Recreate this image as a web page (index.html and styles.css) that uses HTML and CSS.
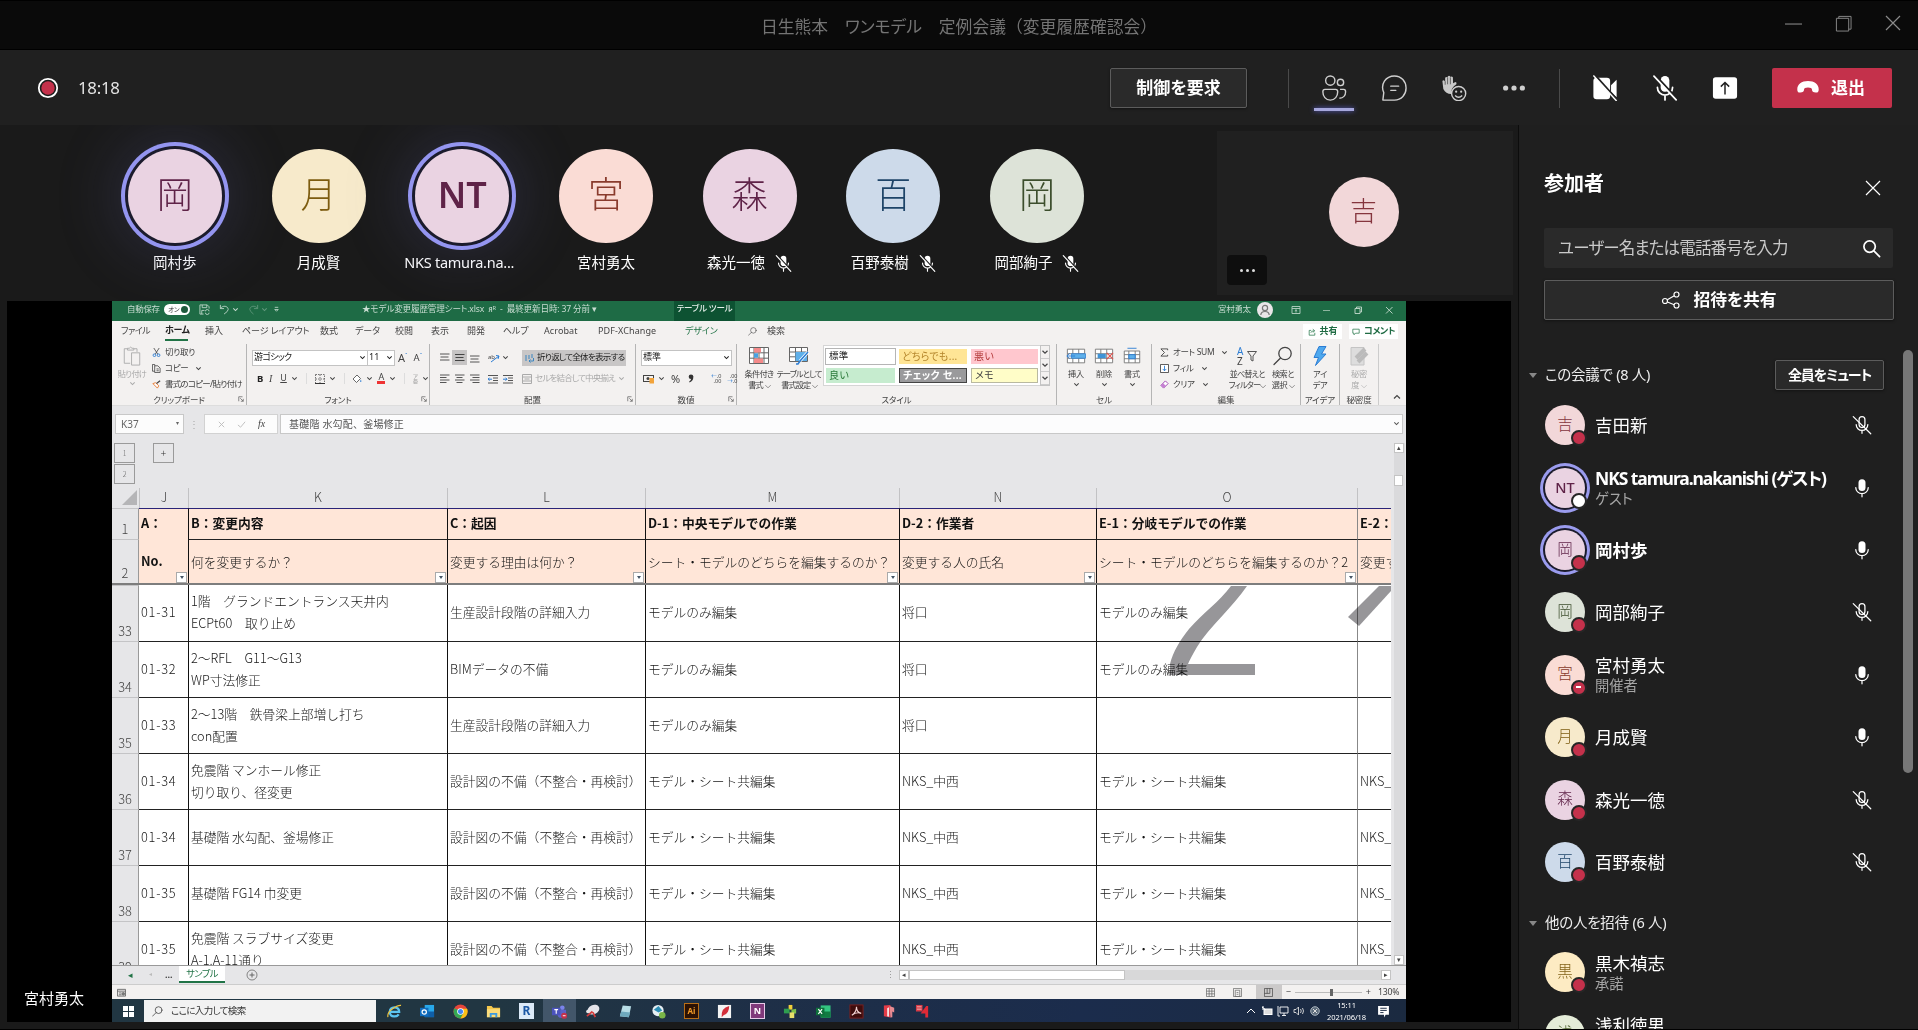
FILE: index.html
```html
<!DOCTYPE html>
<html lang="ja">
<head>
<meta charset="utf-8">
<title>日生熊本 ワンモデル 定例会議</title>
<link rel="stylesheet" href="styles.css">
</head>
<body>
<svg class="defs" aria-hidden="true">
  <symbol id="mic-off" viewBox="0 0 24 24"><g fill="none" stroke="currentColor" stroke-width="1.5" stroke-linecap="round"><rect x="8.5" y="2" width="7" height="13" rx="3.5"/><path d="M5 11.5a7 7 0 0 0 14 0M12 18.5V22M1.5 2l21 20.500"/></g></symbol>
  <symbol id="mic-off-solid" viewBox="0 0 24 24"><rect x="8" y="1" width="8" height="14.500" rx="4" fill="currentColor"/><path d="M5 11.500a7 7 0 0 0 14 0M12 18.500V23" fill="none" stroke="currentColor" stroke-width="1.600" stroke-linecap="round"/><path d="M3.200 .500l20 21.500" stroke="#1f1f1f" stroke-width="2"/><path d="M1.800 1l20.500 22" stroke="currentColor" stroke-width="1.600" stroke-linecap="round"/></symbol>
  <symbol id="mic" viewBox="0 0 24 24"><rect x="7.800" y="1.500" width="8.400" height="14" rx="4.200" fill="currentColor"/><path d="M4.500 11.500a7.500 7.200 0 0 0 15 0M12 18.700V22.500" fill="none" stroke="currentColor" stroke-width="1.500" stroke-linecap="round"/></symbol>
  <symbol id="close" viewBox="0 0 16 16"><path d="M1 1l14 14M15 1L1 15" stroke="currentColor" stroke-width="1.200" fill="none"/></symbol>
  <symbol id="lens" viewBox="0 0 20 20"><g fill="none" stroke="currentColor" stroke-width="1.800" stroke-linecap="round"><circle cx="8" cy="8" r="6"/><path d="M12.500 12.500L18.500 18.500"/></g></symbol>
  <symbol id="lens-left" viewBox="0 0 20 20"><g fill="none" stroke="currentColor" stroke-width="1.300" stroke-linecap="round"><circle cx="12" cy="7.500" r="6.200"/><path d="M7.500 12L1 18.500"/></g></symbol>
  <symbol id="chev" viewBox="0 0 8 8"><path d="M1.500 2.800L4 5.200L6.500 2.800" fill="none" stroke="currentColor" stroke-width="1.200"/></symbol>
  <symbol id="launch" viewBox="0 0 8 8"><path d="M1 7V1H6M3 3l4 4M7 3.800V7H3.800" fill="none" stroke="#555" stroke-width=".9"/></symbol>
</svg>

<header class="titlebar">
  <div class="titlebar-text">日生熊本　ワンモデル　定例会議<span>（変更履歴確認会）</span></div>
  <div class="window-buttons">
    <svg viewBox="0 0 16 16"><path d="M0 8.500H16" stroke="currentColor"/></svg>
    <svg viewBox="0 0 18 18"><path d="M1.500 3.500H14.500V17H1.500ZM4 3.500V1.500H17V15H14.500" fill="none" stroke="currentColor"/></svg>
    <svg><use href="#close"/></svg>
  </div>
</header>

<div class="toolbar">
  <svg class="rec" viewBox="0 0 22 22"><circle cx="11" cy="11" r="9.200" fill="#1d1d1d" stroke="#fff" stroke-width="1.800"/><circle cx="11" cy="11" r="6.700" fill="#c4314b"/></svg>
  <span class="timer">18:18</span>
  <button class="btn control">制御を要求</button>
  <span class="divider d1"></span>
  <div class="tool active"><svg viewBox="0 0 28 28"><g fill="none" stroke="currentColor" stroke-width="1.500"><circle cx="10" cy="6" r="5"/><circle cx="21" cy="8" r="3.400"/><path d="M4.300 15.500H15.700Q18 15.500 18 18C18 23 15 27 10 27S2 23 2 18Q2 15.500 4.300 15.500ZM20.500 15.500H24.500Q26.500 15.500 26.500 18C26.500 22 24 25 19.800 25"/></g></svg></div>
  <div class="tool"><svg viewBox="0 0 28 28"><g fill="none" stroke="currentColor" stroke-width="1.500" stroke-linecap="round"><path d="M2 27L3 19C-1 10 5 1 14.500 1C22 1 27 7 27 14C27 21 22 27 14.500 27Z" stroke-linejoin="round"/><path d="M10.500 12h8.500M10.500 16.500h5.500"/></g></svg></div>
  <div class="tool"><svg viewBox="0 0 28 28"><path d="M1.500 6.500Q2.500 5 4 6.500L4.500 8L4.500 3Q5.700 1.500 7 3L7.300 1.500Q8.600 0 10 1.500L10.200 2.200Q11.500 1 12.800 2.500L13 9L15.500 7.500Q17.500 8 16.500 10C12.500 12.500 10.500 16 11 20.500C7 20.500 4.500 18.500 2.500 15Z" fill="#c8c8c8"/><path d="M7.100 3V10M10.100 2.500V10M4.500 7V10.500" stroke="#444" stroke-width=".8"/><circle cx="19" cy="20" r="7.600" fill="#212121" stroke="currentColor" stroke-width="1.500"/><circle cx="16.300" cy="18" r="1.200" fill="currentColor"/><circle cx="21.700" cy="18" r="1.200" fill="currentColor"/><path d="M15.200 22Q19 26 22.800 22" fill="none" stroke="currentColor" stroke-width="1.500"/></svg></div>
  <div class="tool"><svg viewBox="0 0 28 28"><g fill="currentColor"><circle cx="5" cy="14" r="2.800"/><circle cx="14" cy="14" r="2.800"/><circle cx="23" cy="14" r="2.800"/></g></svg></div>
  <span class="divider d2"></span>
  <div class="tool solid"><svg viewBox="0 0 28 28"><rect x="1.500" y="3" width="18" height="23" rx="3.500" fill="currentColor"/><path d="M20.500 11L26.500 5V24L20.500 18Z" fill="currentColor"/><path d="M3 0L28 28" stroke="#212121" stroke-width="2.500"/><path d="M1.500 .500L26.500 28" stroke="currentColor" stroke-width="1.500"/></svg></div>
  <div class="tool solid"><svg><use href="#mic-off-solid"/></svg></div>
  <div class="tool solid"><svg viewBox="0 0 28 28"><rect x="1" y="2.500" width="26" height="23" rx="3" fill="currentColor"/><path d="M14 21V8.500M9.500 12.500L14 8L18.500 12.500" fill="none" stroke="#212121" stroke-width="1.600"/></svg></div>
  <button class="leave"><svg viewBox="0 0 26 14"><path d="M.5 9.500C.5 4 5.500 0 13 0S25.500 4 25.500 9.500C25.500 12.500 24.500 13.800 22 13.500C19 13.200 17.600 12.500 17.600 10Q17.700 7.500 13 7.500T8.400 10C8.400 12.500 7 13.200 4 13.500C1.500 13.800 .5 12.500 .5 9.500Z" fill="#fff"/></svg>退出</button>
</div>

<div class="body">
<main class="stage">
  <div class="strip">
    <div class="people">
      <div class="person talking"><span class="av pink">岡</span><span class="nm">岡村歩</span></div>
      <div class="person"><span class="av yellow">月</span><span class="nm">月成賢</span></div>
      <div class="person talking"><span class="av pink nt">NT</span><span class="nm latin">NKS tamura.na...</span></div>
      <div class="person"><span class="av peach">宮</span><span class="nm">宮村勇太</span></div>
      <div class="person"><span class="av pink">森</span><span class="nm">森光一徳<svg><use href="#mic-off-solid"/></svg></span></div>
      <div class="person"><span class="av blue">百</span><span class="nm">百野泰樹<svg><use href="#mic-off-solid"/></svg></span></div>
      <div class="person"><span class="av green">岡</span><span class="nm">岡部絢子<svg><use href="#mic-off-solid"/></svg></span></div>
    </div>
    <div class="self"><span class="av rose">吉</span><span class="more"><i></i><i></i><i></i></span></div>
  </div>

  <section class="share">
    <div class="presenter">宮村勇太</div>
    <div class="excel">
      <div class="x-title">
        <span class="autosave">自動保存</span><span class="toggle">オン<i></i></span>
        <svg class="q-save" viewBox="0 0 12 12"><path d="M1 1H9L11 3V5M1 1V11H5M3.500 1V4H8.500V1M3 11V7H6M7 8a2 2 0 0 1 4 0M11 9.500a2 2 0 0 1-4 0" fill="none" stroke="#b9d3c5"/></svg>
        <svg class="q-undo" viewBox="0 0 12 12"><path d="M1.500 1V5H5.500M1.500 5C4 1 10 2 10 6Q10 8 5.500 11" fill="none" stroke="#b9d3c5"/></svg>
        <svg class="tiny"><use href="#chev"/></svg>
        <svg class="q-undo dimmed" viewBox="0 0 12 12"><path d="M10.500 1V5H6.500M10.500 5C8 1 2 2 2 6Q2 8 6 11" fill="none" stroke="#b9d3c5"/></svg>
        <svg class="tiny dimmed"><use href="#chev"/></svg>
        <svg class="tiny q-more" viewBox="0 0 8 8"><path d="M2 1.500H6M2 4L4 6L6 4Z" fill="none" stroke="#b9d3c5"/></svg>
        <span class="doc">★モデル変更履歴管理シート.xlsx&nbsp; ᴙᴿ&nbsp; - &nbsp;最終更新日時: 37 分前 ▾</span>
        <span class="context">テーブル ツール</span>
        <span class="x-user">宮村勇太</span>
        <svg class="x-face" viewBox="0 0 16 16"><circle cx="8" cy="8" r="8" fill="#e9e6e8"/><circle cx="8" cy="6" r="2.600" fill="none" stroke="#777" stroke-width="1.200"/><path d="M3.800 13Q4 9.500 8 9.500T12.200 13" fill="none" stroke="#777" stroke-width="1.200"/></svg>
        <div class="x-win">
          <svg viewBox="0 0 10 10"><path d="M1 1.500H9V8.500H1ZM1 3.500H9M5 7.500V4.800M3.800 5.800L5 4.700L6.200 5.800" fill="none" stroke="#b9d3c5" stroke-width=".9"/></svg>
          <svg viewBox="0 0 10 10"><path d="M1 5.500H8" stroke="#8eb59f"/></svg>
          <svg viewBox="0 0 10 10"><path d="M2 3.500H7V8.500H2ZM3.500 3.500V2H8.500V7H7" fill="none" stroke="#c4dacd" stroke-width=".9"/></svg>
          <svg viewBox="0 0 10 10"><path d="M2 2l6.500 6.500M8.500 2L2 8.500" stroke="#c4dacd" stroke-width=".9"/></svg>
        </div>
      </div>

      <nav class="x-tabs">
        <span class="t1">ファイル</span><span class="t2 on">ホーム</span><span class="t3">挿入</span><span class="t4">ページ レイアウト</span><span class="t5">数式</span><span class="t6">データ</span><span class="t7">校閲</span><span class="t8">表示</span><span class="t9">開発</span><span class="t10">ヘルプ</span><span class="t11">Acrobat</span><span class="t12">PDF-XChange</span><span class="t13">デザイン</span><span class="t14"><svg><use href="#lens-left"/></svg>検索</span>
        <b class="share-btn"><svg viewBox="0 0 10 10"><path d="M4 3H1.500V9H8.500V6M3.500 6Q4 3.500 7.500 3.500M6 1.500L8.500 3.500L6 5.500" fill="none" stroke="#217346" stroke-width=".9"/></svg>共有</b><b class="comment-btn"><svg viewBox="0 0 10 10"><path d="M1 1.500H9V6.500H4.500L2.500 8.500V6.500H1Z" fill="none" stroke="#217346" stroke-width=".9"/></svg>コメント</b>
      </nav>

      <div class="ribbon">
        <div class="grp g-clip">
          <div class="g-body">
            <div class="big dim"><svg viewBox="0 0 20 22"><path d="M5 3H1.500V19H8M12 3H15.500V6.500M5 4.500V2.500H7Q8.500 0 10 2.500H12V4.500ZM9.500 7.500H18.500V21H9.500Z" fill="#f3f1f0" stroke="#aaa"/></svg><span>貼り付け</span><svg class="tiny"><use href="#chev"/></svg></div>
            <div class="stack">
              <span><svg viewBox="0 0 10 10"><path d="M2 0L6.500 7M8 0L3.500 7" stroke="#444" stroke-width=".9"/><circle cx="2.700" cy="8" r="1.500" fill="none" stroke="#2b7cd3"/><circle cx="7.300" cy="8" r="1.500" fill="none" stroke="#2b7cd3"/></svg>切り取り</span>
              <span><svg viewBox="0 0 10 10"><path d="M3 2V.5H.5V8H3M3 2H6.500L9 4.500V9.500H3ZM5 5.500H7.500M5 7.500H7.500" fill="none" stroke="#444" stroke-width=".9"/></svg>コピー<svg class="tiny"><use href="#chev"/></svg></span>
              <span class="w"><svg viewBox="0 0 10 10"><path d="M1 4L6 9L7.500 6.500L4 3Z" fill="#fff" stroke="#e8772e"/><path d="M5 4L9 .8" stroke="#444" stroke-width="1.400"/></svg>書式のコピー/貼り付け</span>
            </div>
          </div>
          <div class="g-label">クリップボード<svg><use href="#launch"/></svg></div>
        </div>

        <div class="grp g-font">
          <div class="g-body rows">
            <div class="row r-f1"><span class="combo fam">游ゴシック<svg class="tiny"><use href="#chev"/></svg></span><span class="combo size">11<svg class="tiny"><use href="#chev"/></svg></span><span class="aup">A<sup>ˆ</sup></span><span class="adn">A<sup>ˇ</sup></span></div>
            <div class="row r-f2"><b>B</b><i class="it">I</i><u>U</u><svg class="tiny"><use href="#chev"/></svg><em class="vr"></em><svg class="ic" viewBox="0 0 10 10"><path d="M.5.5H9.500V9.500M5 .5V9M.5.500V9M.5 5H9.500" fill="none" stroke="#555" stroke-width=".8" stroke-dasharray="1.500 1"/><path d="M0 9.500H10" stroke="#333"/></svg><svg class="tiny"><use href="#chev"/></svg><em class="vr"></em><svg class="ic" viewBox="0 0 10 10"><path d="M1 5L5 1L8.500 4.500L4.500 8.500Z" fill="#fff" stroke="#444" stroke-width=".8"/><path d="M9 5.500Q10 8 8.700 8T9 5.500" fill="#2b7cd3"/></svg><svg class="tiny"><use href="#chev"/></svg><span class="fc">A</span><svg class="tiny"><use href="#chev"/></svg><em class="vr"></em><span class="ruby">ア<br>亜</span><svg class="tiny"><use href="#chev"/></svg></div>
          </div>
          <div class="g-label">フォント<svg><use href="#launch"/></svg></div>
        </div>

        <div class="grp g-align">
          <div class="g-body rows">
            <div class="row r-a">
              <svg class="al" viewBox="0 0 10 10"><path d="M0 1.500H10M1 4.500H9M0 7.500H10" stroke="#555"/></svg><svg class="al sel" viewBox="0 0 10 10"><path d="M0 2H10M1 5H9M0 8H10" stroke="#444"/></svg><svg class="al" viewBox="0 0 10 10"><path d="M0 3.500H10M1 6.500H9M0 9.500H10" stroke="#555"/></svg>
              <svg class="ori" viewBox="0 0 12 10"><path d="M3 9L11 3M8 2.500L11 3L10 6" fill="none" stroke="#2b7cd3"/><text x="0" y="6" font-size="6" fill="#444">ab</text></svg><svg class="tiny"><use href="#chev"/></svg>
              <span class="wrap"><svg viewBox="0 0 10 10"><path d="M1 2V8M4 2V6M7 1V5M8.500 5V8H4M5.500 6.500L4 8L5.500 9.500" fill="none" stroke="#3a85c0"/></svg>折り返して全体を表示する</span>
            </div>
            <div class="row r-a">
              <svg class="al" viewBox="0 0 10 10"><path d="M0 1.500H10M0 4H7M0 6.500H10M0 9H7" stroke="#555"/></svg><svg class="al" viewBox="0 0 10 10"><path d="M0 1.500H10M2 4H8M0 6.500H10M2 9H8" stroke="#555"/></svg><svg class="al" viewBox="0 0 10 10"><path d="M0 1.500H10M3 4H10M0 6.500H10M3 9H10" stroke="#555"/></svg>
              <svg class="ind" viewBox="0 0 10 10"><path d="M0 1.500H10M5 4H10M5 6.500H10M0 9H10" stroke="#555"/><path d="M4 5.200H0M1.500 3.700L0 5.200L1.500 6.700" fill="none" stroke="#2b7cd3"/></svg><svg class="ind2" viewBox="0 0 10 10"><path d="M0 1.500H10M5 4H10M5 6.500H10M0 9H10" stroke="#555"/><path d="M0 5.200H4M2.500 3.700L4 5.200L2.500 6.700" fill="none" stroke="#2b7cd3"/></svg>
              <span class="merge"><svg viewBox="0 0 10 10"><path d="M.5.500H9.500V9.500H.500ZM.5 3H9.500M.5 7H9.500M2.500 5H7.500" fill="none" stroke="#aaa"/></svg>セルを結合して中央揃え<svg class="tiny"><use href="#chev"/></svg></span>
            </div>
          </div>
          <div class="g-label">配置<svg><use href="#launch"/></svg></div>
        </div>

        <div class="grp g-num">
          <div class="g-body rows">
            <div class="row"><span class="combo std">標準<svg class="tiny"><use href="#chev"/></svg></span></div>
            <div class="row r-n"><svg class="cur" viewBox="0 0 12 10"><rect x=".5" y="1.500" width="10" height="6" fill="none" stroke="#444"/><circle cx="5" cy="4.500" r="1.500" fill="#444"/><rect x="6.500" y="4" width="4.500" height="5.500" fill="#f2a33a"/></svg><svg class="tiny"><use href="#chev"/></svg><span class="pct">%</span><svg class="comma" viewBox="0 0 6 10"><circle cx="3" cy="2.800" r="2.300" fill="#333"/><path d="M5.300 2.500Q5.500 7 1.500 8.500L1.200 7.500Q3.500 6 3.300 3Z" fill="#333"/></svg><em class="vr"></em><span class="dec"><s>←</s>.0<br>.00</span><span class="dec">.00<br><s>→</s>.0</span></div>
          </div>
          <div class="g-label">数値<svg><use href="#launch"/></svg></div>
        </div>

        <div class="grp g-style">
          <div class="g-body">
            <div class="big cond"><svg viewBox="0 0 20 18"><path d="M.5.500H19.500V16.500H.500ZM.5 5.800H19.500M.5 11.200H19.500M5 .5V16.500M10 .5V16.500M15 .5V16.500" fill="#fff" stroke="#666"/><path d="M5 1H12V5.500H5ZM5 11.500H14V16H5Z" fill="#f58a8a"/><path d="M5 6.300H9V10.700H5Z" fill="#4aa0e0"/></svg><span>条件付き<br>書式 ⌵</span></div>
            <div class="big tfmt"><svg viewBox="0 0 20 18"><path d="M.5.500H18.500V14.500H.500ZM.5 5H18.500M.5 9.800H18.500M6.500 .5V14.500M12.500 .5V14.500" fill="#fff" stroke="#666"/><path d="M6.500 5H18V14H6.500Z" fill="#5fb0ea"/><path d="M19 5L11 14" stroke="#fff" stroke-width="3"/><path d="M19 5L11 14L9 17L7 17" fill="none" stroke="#2b7cd3" stroke-width="1.500"/></svg><span>テーブルとして<br>書式設定 ⌵</span></div>
            <div class="gallery"><span class="s1">標準</span><span class="s2">どちらでも...</span><span class="s3">悪い</span><span class="s4">良い</span><span class="s5">チェック セ...</span><span class="s6">メモ</span></div>
            <div class="gscroll"><svg><use href="#chev"/></svg><svg><use href="#chev"/></svg><svg><use href="#chev"/></svg></div>
          </div>
          <div class="g-label">スタイル</div>
        </div>

        <div class="grp g-cell">
          <div class="g-body">
            <div class="big"><svg viewBox="0 0 22 18"><path d="M1.500 1.500H20.500V16.500H1.500ZM7.500 1.500V16.500M14 1.500V16.500M1.500 6.500H20.500M1.500 11.500H20.500" fill="#fff" stroke="#777"/><path d="M6 6.500H21.500V11.500H6Z" fill="#5fb0ea" stroke="#2b7cd3" stroke-width=".8"/><path d="M10 9H1M4 6L1 9L4 12" fill="none" stroke="#2b7cd3"/></svg><span>挿入</span><svg class="tiny"><use href="#chev"/></svg></div>
            <div class="big"><svg viewBox="0 0 22 18"><path d="M1.500 1.500H20.500V16.500H1.500ZM7.500 1.500V16.500M14 1.500V16.500M1.500 6.500H20.500M1.500 11.500H20.500" fill="#fff" stroke="#777"/><path d="M4 6.500H13V11.500H4Z" fill="#3f93d6"/><path d="M14 5.500L21 12.500M21 5.500L14 12.500" stroke="#e8504a" stroke-width="1.200"/></svg><span>削除</span><svg class="tiny"><use href="#chev"/></svg></div>
            <div class="big"><svg viewBox="0 0 22 18"><path d="M2.500 3.500H19.500V16.500H2.500ZM7.500 3.500V16.500M14.500 3.500V16.500M2.500 7.500H19.500M2.500 12H19.500" fill="#fff" stroke="#777"/><path d="M7.500 7.500H14.500V12H7.500Z" fill="#5fb0ea" stroke="#2b7cd3"/><path d="M6 .500H16" stroke="#2b7cd3"/></svg><span>書式</span><svg class="tiny"><use href="#chev"/></svg></div>
          </div>
          <div class="g-label">セル</div>
        </div>

        <div class="grp g-edit">
          <div class="g-body">
            <div class="stack">
              <span class="sum"><svg viewBox="0 0 10 10"><path d="M8.500 2.500V1H1L5 5L1 9H8.500V7.500" fill="none" stroke="#444"/></svg>オート SUM<svg class="tiny"><use href="#chev"/></svg></span>
              <span><svg viewBox="0 0 10 10"><path d="M.5.500H9.500V9.500H.500Z" fill="#fff" stroke="#444"/><path d="M5 2V7.500M3 5.500L5 7.500L7 5.500" fill="none" stroke="#2b7cd3"/></svg>フィル<svg class="tiny"><use href="#chev"/></svg></span>
              <span><svg viewBox="0 0 10 10"><path d="M1 6L6 1L9 4L4 9Z" fill="#fff" stroke="#9b3fae"/><path d="M1 6L3.500 3.500L6.500 6.500L4 9Z" fill="#c57fd2"/></svg>クリア<svg class="tiny"><use href="#chev"/></svg></span>
            </div>
            <div class="big sort"><svg viewBox="0 0 20 20"><path d="M10.500 5.500H19.500L16 10V15L14 14V10Z" fill="none" stroke="#555"/><text x="0" y="9" font-size="10" fill="#2b7cd3">A</text><text x="0" y="19" font-size="10" fill="#444">Z</text></svg><span>並べ替えと<br>フィルター⌵</span></div>
            <div class="big find"><svg><use href="#lens-left"/></svg><span>検索と<br>選択 ⌵</span></div>
          </div>
          <div class="g-label">編集</div>
        </div>

        <div class="grp g-idea"><div class="g-body"><div class="big"><svg viewBox="0 0 20 20"><path d="M9 .500H16L11.500 8H16L5.500 19.500L8.500 11.500H4Z" fill="#4ea8ee" stroke="#2b7cd3"/></svg><span>アイ<br>デア</span></div></div><div class="g-label">アイデア</div></div>
        <div class="grp g-sec"><div class="g-body"><div class="big dim"><svg viewBox="0 0 20 20"><path d="M2 1.500H15V19H2Z" fill="#ddd" stroke="#c4c4c4"/><path d="M7 12L16 3M9 16L18 7" stroke="#bbb" stroke-width="4"/></svg><span>秘密<br>度 ⌵</span></div></div><div class="g-label">秘密度</div></div>
        <svg class="collapse" viewBox="0 0 8 8"><path d="M1 5.500L4 2.500L7 5.500" fill="none" stroke="#444" stroke-width="1.200"/></svg>
      </div>

      <div class="fbar">
        <span class="nbox">K37<i>▾</i></span><span class="dots">⋮</span>
        <span class="fx"><svg viewBox="0 0 10 10"><path d="M2 2l6 6M8 2L2 8" stroke="#bbb"/></svg><svg viewBox="0 0 10 10"><path d="M1 5.500L4 8L9 2" fill="none" stroke="#bbb"/></svg><i>fx</i></span>
        <span class="formula">基礎階 水勾配、釜場修正<svg class="tiny"><use href="#chev"/></svg></span>
      </div>

      <div class="grid-area">
        <div class="sheet">
          <div class="outline"><div class="lv"><span>1</span><span>2</span></div><span class="plus">+</span></div>
          <div class="r cols"><span class="corner"></span><span>J</span><span>K</span><span>L</span><span>M</span><span>N</span><span>O</span><span></span></div>
          <div class="r h1"><span>1</span><span>A：</span><span>B：変更内容</span><span>C：起因</span><span>D-1：中央モデルでの作業</span><span>D-2：作業者</span><span>E-1：分岐モデルでの作業</span><span>E-2：</span></div>
          <div class="r h2"><span>2</span><span><b>No.</b><i></i></span><span>何を変更するか？<i></i></span><span>変更する理由は何か？<i></i></span><span>シート・モデルのどちらを編集するのか？<i></i></span><span>変更する人の氏名<i></i></span><span>シート・モデルのどちらを編集するのか？2<i></i></span><span>変更す</span></div>
          <div class="r d first"><span>33</span><span>01-31</span><span>1階　グランドエントランス天井内<br>ECPt60　取り止め</span><span>生産設計段階の詳細入力</span><span>モデルのみ編集</span><span>将口</span><span>モデルのみ編集</span><span></span></div>
          <div class="r d"><span>34</span><span>01-32</span><span>2～RFL　G11～G13<br>WP寸法修正</span><span>BIMデータの不備</span><span>モデルのみ編集</span><span>将口</span><span>モデルのみ編集</span><span></span></div>
          <div class="r d"><span>35</span><span>01-33</span><span>2～13階　鉄骨梁上部増し打ち<br>con配置</span><span>生産設計段階の詳細入力</span><span>モデルのみ編集</span><span>将口</span><span></span><span></span></div>
          <div class="r d"><span>36</span><span>01-34</span><span>免震階 マンホール修正<br>切り取り、径変更</span><span class="long">設計図の不備（不整合・再検討）</span><span>モデル・シート共編集</span><span>NKS_中西</span><span>モデル・シート共編集</span><span>NKS_</span></div>
          <div class="r d"><span>37</span><span>01-34</span><span>基礎階 水勾配、釜場修正</span><span class="long">設計図の不備（不整合・再検討）</span><span>モデル・シート共編集</span><span>NKS_中西</span><span>モデル・シート共編集</span><span>NKS_</span></div>
          <div class="r d"><span>38</span><span>01-35</span><span>基礎階 FG14 巾変更</span><span class="long">設計図の不備（不整合・再検討）</span><span>モデル・シート共編集</span><span>NKS_中西</span><span>モデル・シート共編集</span><span>NKS_</span></div>
          <div class="r d"><span>39</span><span>01-35</span><span>免震階 スラブサイズ変更<br>A-1.A-11通り</span><span class="long">設計図の不備（不整合・再検討）</span><span>モデル・シート共編集</span><span>NKS_中西</span><span>モデル・シート共編集</span><span>NKS_</span></div>
          <svg class="watermark" viewBox="0 0 230 90"><g fill="#979699"><path d="M70 0H86C72 21 48 41 36 61Q29 73 27 78H94V89H9V78C12 66 19 54 28 43C42 27 58 16 70 0Z"/><path d="M218 0H230V5L198 40L187 31Z"/></g></svg>
        </div>
        <div class="vscroll"><i>▴</i><b></b><i>▾</i></div>
      </div>

      <div class="sheets"><span class="prev">◂</span><span class="next">◂</span><span class="ell">...</span><span class="tab">サンプル</span><svg class="add" viewBox="0 0 12 12"><circle cx="6" cy="6" r="5" fill="none" stroke="#777" stroke-width=".9"/><path d="M6 3.500V8.500M3.500 6H8.500" stroke="#666"/></svg><span class="grip">⋮</span><div class="hscroll"><i>◂</i><b></b><i>▸</i></div></div>
      <div class="status">
        <svg class="macro" viewBox="0 0 10 10"><path d="M.5 1.500H9.500V9H.500ZM.5 3.500H9.500M2 5.500H5M2 7.500H5" fill="none" stroke="#666"/><circle cx="7" cy="6.500" r="2" fill="#777"/></svg>
        <svg class="v1" viewBox="0 0 10 10"><path d="M.5.500H9.500V9.500H.500ZM3.500 .5V9.500M6.500 .5V9.500M.5 3.500H9.500M.5 6.500H9.500" fill="none" stroke="#666" stroke-width=".8"/></svg><svg class="v2" viewBox="0 0 10 10"><path d="M.5.500H9.500V9.500H.500ZM2.500 2.500H7.500V9.500H2.500ZM4 5H6M4 7H6" fill="none" stroke="#666" stroke-width=".8"/></svg><span class="v3"><svg viewBox="0 0 10 10"><path d="M.5.500H9.500V9.500H.500ZM3.500 .5V6M6.500 .5V6M.5 6H6.500" fill="none" stroke="#444" stroke-width=".8"/></svg></span>
        <span class="minus">−</span><span class="slider"><i></i></span><span class="plus2">+</span><span class="zoom">130%</span>
      </div>

      <div class="taskbar">
        <span class="start"><i></i><i></i><i></i><i></i></span>
        <span class="tsearch"><svg><use href="#lens-left"/></svg>ここに入力して検索</span>
        <div class="apps">
          <span><svg viewBox="0 0 16 16"><path d="M3 8.500H13Q13 3.500 8 3.500T3 8.500T8 13.200Q11 13.200 12.500 11" fill="none" stroke="#5cc4f0" stroke-width="2.400"/><path d="M1 14Q0 9 6 5T15 1.500" fill="none" stroke="#f2c53d" stroke-width="1.200"/></svg></span>
          <span><svg viewBox="0 0 16 16"><path d="M5 1H15V14H5Z" fill="#28a8ea"/><path d="M5 8H15V14H5Z" fill="#0f5fa8"/><rect y="4" width="9" height="9" fill="#0f6cbd"/><circle cx="4.500" cy="8.500" r="2.300" fill="none" stroke="#fff" stroke-width="1.300"/></svg></span>
          <span><svg viewBox="0 0 16 16"><circle cx="8" cy="8" r="7.500" fill="#e6453a"/><path d="M1.500 4.500A7.500 7.500 0 0 0 8 15.500L11.500 9Z" fill="#34a853"/><path d="M8 15.500A7.500 7.500 0 0 0 15 5H8L11.500 9Z" fill="#fbc116"/><circle cx="8" cy="8" r="3.500" fill="#fff"/><circle cx="8" cy="8" r="2.700" fill="#4285f4"/></svg></span>
          <span><svg viewBox="0 0 16 16"><path d="M1 2H6L7.500 4H15V14H1Z" fill="#f5c84c"/><path d="M1 5.500H15V14H1Z" fill="#fbdc7a"/><path d="M4 9.500H12V14H10V11.500H6V14H4Z" fill="#3d9be0"/></svg></span>
          <span class="rv">R</span>
          <span class="cur-app"><svg viewBox="0 0 16 16"><circle cx="11" cy="4" r="2.500" fill="#7b83eb"/><path d="M6 6H15V11Q14 15 10 15T6 11Z" fill="#5b62c9"/><rect y="4" width="9" height="8" fill="#4b53bc"/><path d="M2.500 6H6.500M4.500 6V10.500" stroke="#fff" stroke-width="1.200"/><circle cx="13" cy="12.500" r="3.300" fill="#c4314b"/><path d="M11.500 12.500H14.500" stroke="#fff"/></svg></span>
          <span><svg viewBox="0 0 16 16"><ellipse cx="9" cy="6" rx="6.500" ry="5" fill="#e4e4ea" transform="rotate(-25 9 6)"/><path d="M2 13L8 8M11 14L8.500 9" stroke="#d23b3b" stroke-width="1.800"/><circle cx="3" cy="8" r="1.800" fill="#e7e7e7"/></svg></span>
          <span><svg viewBox="0 0 16 16"><path d="M5 1.500L14 2.500L11.500 14L2 13Z" fill="#b8dde6"/><path d="M3.500 8L13 9L11.500 14L2 13Z" fill="#6fa9bd"/></svg></span>
          <span><svg viewBox="0 0 16 16"><circle cx="7.500" cy="7" r="6" fill="#e6eef2"/><path d="M3 6L8 2L12 7L8 9Z" fill="#2c8db5"/><circle cx="12" cy="12" r="3.500" fill="#7ab648"/></svg></span>
          <span class="ai">Ai</span>
          <span><svg viewBox="0 0 16 16"><rect x="1" y="1" width="14" height="14" fill="#f3f3f3"/><path d="M5 14Q4 4 13 2Q13 10 7 12Z" fill="#d32f3a"/></svg></span>
          <span class="on">N</span>
          <span><svg viewBox="0 0 16 16"><path d="M6 1H10V6H6Z" fill="#f4d03a"/><path d="M1 5H7V10H1Z" fill="#2e9e4f"/><path d="M9 6L14 5V10H9Z" fill="#7fc04a"/><path d="M7 9H12V15H7Z" fill="#e8e06a"/></svg></span>
          <span><svg viewBox="0 0 16 16"><path d="M5 1.500H15.500V14.500H5Z" fill="#33c481"/><path d="M5 8H15.500V14.500H5Z" fill="#107c41"/><rect y="4" width="9" height="8" fill="#0f703b"/><path d="M2.500 5.500L6.500 10.500M6.500 5.500L2.500 10.500" stroke="#fff" stroke-width="1.200"/></svg></span>
          <span><svg viewBox="0 0 16 16"><rect x="1" y="1" width="14" height="14" fill="#3e0d0d" stroke="#7a2020"/><path d="M3 12Q8 9 8 3Q8 9 13 10Q8 8 3 12Z" fill="none" stroke="#f3d3d3" stroke-width="1.200"/></svg></span>
          <span><svg viewBox="0 0 16 16"><path d="M2 1.500L9 1V14.500L2 13Z" fill="#e23b47"/><path d="M5.500 4.500L7.500 3.500V13.500L5.500 13Z" fill="#f6e0e2"/><path d="M8 2L13 4V9L11 8V14L9 14.500Z" fill="#e78a91"/></svg></span>
          <span><svg viewBox="0 0 16 16"><path d="M1 1H8V8H1Z" fill="#d63a45"/><path d="M12 2L6 10H11V14.500H14V2Z" fill="#e12a36"/><path d="M2 3H7M2 5.500H7" stroke="#f4b5b9"/></svg></span>
        </div>
        <div class="tray">
          <svg viewBox="0 0 12 12"><path d="M2 8L6 4L10 8" fill="none" stroke="#fff"/></svg>
          <svg viewBox="0 0 12 12"><rect x="3" y="4" width="8" height="5.500" fill="#ddd" stroke="#fff"/><path d="M1 2L5 5M2 1V5" stroke="#fff"/></svg>
          <svg viewBox="0 0 12 12"><path d="M3 2H11V8H3ZM7 8V10.500M5 10.500H9M1 1V11H3" fill="none" stroke="#fff" stroke-width=".9"/></svg>
          <svg viewBox="0 0 12 12"><path d="M1 4.500H3L5.500 2V10L3 7.500H1ZM7.500 4Q9 6 7.500 8M9.500 3Q11.500 6 9.500 9" fill="none" stroke="#ddd" stroke-width=".9"/></svg>
          <svg viewBox="0 0 12 12"><circle cx="6" cy="6" r="4.300" fill="#5d6c7c" stroke="#aab4be"/><path d="M4 4L8 8M8 4L4 8" stroke="#ddd"/></svg>
        </div>
        <div class="clock">15:11<br>2021/06/18</div>
        <svg class="note" viewBox="0 0 12 12"><path d="M1 1H11V9H8L6.500 11.500V9H1Z" fill="#fff"/><path d="M3 3H9M3 5H9M3 7H6" stroke="#1d2c45" stroke-width=".9"/></svg>
      </div>
    </div>
  </section>
</main>

<aside class="panel">
  <div class="p-head"><h2>参加者</h2><svg><use href="#close"/></svg></div>
  <div class="p-search"><span>ユーザー名または電話番号を入力</span><svg><use href="#lens"/></svg></div>
  <button class="btn invite"><svg viewBox="0 0 20 20"><g fill="none" stroke="#fff" stroke-width="1.200"><circle cx="4" cy="11" r="2.500"/><circle cx="15.500" cy="4.500" r="2.500"/><circle cx="15.500" cy="15.500" r="2.500"/><path d="M6.300 9.700L13.300 5.800M6.400 12L13.200 14.700"/></g></svg>招待を共有</button>
  <div class="p-sec"><i></i><span>この会議で (8 人)</span><button class="btn mute">全員をミュート</button></div>
  <ul class="plist">
    <li><span class="av rose">吉<em></em></span><div><p>吉田新</p></div><svg><use href="#mic-off"/></svg></li>
    <li><span class="av pink ring nt">NT<em class="guest"></em></span><div><p class="b lat">NKS tamura.nakanishi (ゲスト)</p><small>ゲスト</small></div><svg><use href="#mic"/></svg></li>
    <li><span class="av pink ring">岡<em></em></span><div><p class="b">岡村歩</p></div><svg><use href="#mic"/></svg></li>
    <li><span class="av green">岡<em></em></span><div><p>岡部絢子</p></div><svg><use href="#mic-off"/></svg></li>
    <li><span class="av peach">宮<em class="dnd"></em></span><div><p>宮村勇太</p><small>開催者</small></div><svg><use href="#mic"/></svg></li>
    <li><span class="av yellow">月<em></em></span><div><p>月成賢</p></div><svg><use href="#mic"/></svg></li>
    <li><span class="av pink">森<em></em></span><div><p>森光一徳</p></div><svg><use href="#mic-off"/></svg></li>
    <li><span class="av blue">百<em></em></span><div><p>百野泰樹</p></div><svg><use href="#mic-off"/></svg></li>
  </ul>
  <div class="p-sec second"><i></i><span>他の人を招待 (6 人)</span></div>
  <ul class="plist invited">
    <li><span class="av amber">黒<em></em></span><div><p>黒木禎志</p><small>承諾</small></div></li>
    <li><span class="av lime">浅</span><div><p>浅利徳男</p><small>承諾</small></div></li>
  </ul>
  <div class="p-scroll"></div>
</aside>
</div>
</body>
</html>
```

FILE: styles.css
```css
* { box-sizing: border-box; }
html, body { margin: 0; height: 1030px; overflow: hidden; }
body {
  background: #1b1b1b; color: #fff;
  font-family: "Noto Sans", "Noto Sans CJK JP", sans-serif;
  font-feature-settings: "palt"; line-height: 1.2;
  display: flex; flex-direction: column;
}
svg { display: block; flex: none; }
button { font: inherit; color: inherit; }
.defs { position: absolute; width: 0; height: 0; }

/* window title */
.titlebar { height: 50px; background: #0a0a0a; border-top: 1px solid #000; border-bottom: 1px solid #000; position: relative; display: flex; align-items: center; flex: none; }
.titlebar-text { width: 1918px; text-align: center; padding-left: 0; padding-top: 4px; font-size: 16.800px; color: #747474; }
.titlebar-text span { font-feature-settings: normal; }
.window-buttons { position: absolute; right: 17px; top: 14px; display: flex; gap: 33px; color: #8a8a8a; }
.window-buttons svg { width: 17px; height: 17px; }
.window-buttons svg:last-child { width: 16px; height: 16px; }

/* call toolbar */
.toolbar { height: 75px; flex: none; background: #202020; display: flex; align-items: center; padding: 1px 26px 0 37px; }
.rec { width: 22px; height: 22px; }
.timer { margin-left: 19px; font-size: 16.800px; letter-spacing: -.25px; color: #e3e3e3; }
.btn { background: #2a2a2a; border: 1px solid #5c5c5c; border-radius: 2px; color: #fff; font-weight: 700; padding: 0; box-shadow: 0 1px 3px #0006; }
.control { margin-left: auto; width: 137px; height: 40px; font-size: 17px; }
.divider { width: 1px; height: 39px; background: #4a4a4a; }
.d1 { margin: 0 15px 0 41px; }
.d2 { margin: 0 15px; }
.tool { width: 60px; height: 60px; display: flex; align-items: center; justify-content: center; color: #cfcfcf; position: relative; }
.tool svg { width: 26px; height: 26px; }
.tool.solid { color: #fff; }
.tool.active::after { content: ""; position: absolute; left: 10px; top: 50px; width: 40px; height: 3px; background: #a6a7dc; box-shadow: 0 0 5px #5b5fc7; }
.leave { margin-left: 17px; width: 120px; height: 40px; background: #c4314b; border: 0; border-radius: 2px; font-weight: 700; font-size: 17px; display: flex; align-items: center; justify-content: center; gap: 10px; padding: 0 4px 0 0; }
.leave svg { width: 26px; height: 12px; margin-bottom: 2px; }

.body { flex: 1; display: flex; min-height: 0; }
.stage { width: 1518px; flex: none; background: #1a1a1a; padding: 0 5px 7px 7px; border-bottom: 1px solid #000; }

/* participant strip */
.strip { height: 176px; display: flex; overflow: hidden; }
.people { display: flex; padding-left: 96px; width: 1210px; flex: none; }
.person { width: 143.700px; display: flex; flex-direction: column; align-items: center; padding-top: 24px; flex: none; }
.av { border-radius: 50%; display: flex; align-items: center; justify-content: center; flex: none; position: relative; }
.person .av { width: 94px; height: 94px; font-size: 36px; font-weight: 300; padding-bottom: 2px; }
.pink { background: #ead3e2; color: #5f2348; }
.yellow { background: #f7eacb; color: #7d5c10; }
.peach { background: #fadcd5; color: #893b2d; }
.blue { background: #cddaea; color: #1e4468; }
.green { background: #dde3d8; color: #3c4e2d; }
.rose { background: #f2d7d9; color: #85353e; }
.amber { background: #fdebc3; color: #83631a; }
.lime { background: #e4ecd8; color: #4d6330; }
.person .nt { font-weight: 600; font-size: 36px; }
.talking .av { box-shadow: 0 0 0 3px #1b1b2c, 0 0 0 7px #9495f0, 0 0 60px 14px #6264a738; }
.nm { margin-top: 10px; height: 20px; font-size: 14.500px; display: flex; align-items: center; gap: 10px; white-space: nowrap; }
.nm svg { width: 17px; height: 17px; }
.nm.latin { letter-spacing: -.25px; margin-right: 6px; }
.self { width: 296px; height: 164px; margin-top: 6px; background: #202020; display: flex; align-items: center; justify-content: center; position: relative; padding: 0 3px 2px 0; }
.self .av { width: 70px; height: 70px; font-size: 27px; font-weight: 300; padding-bottom: 2px; }
.more { position: absolute; left: 10px; top: 124px; width: 40px; height: 30px; border-radius: 4px; background: #0e0e0e; display: flex; align-items: center; justify-content: center; gap: 3px; }
.more i { width: 3px; height: 3px; border-radius: 50%; background: #ddd; }

/* shared screen */
.share { height: 721px; width: 1504px; background: #000; display: flex; }
.presenter { width: 105px; flex: none; align-self: flex-end; padding: 0 0 15px 17px; font-size: 15px; }
.excel { width: 1294px; height: 721px; flex: none; background: #e6e6e8; color: #444; font-size: 9px; display: flex; flex-direction: column; overflow: hidden; white-space: nowrap; }
.tiny { width: 7px; height: 7px; }

.x-title { height: 20px; background: #1e6b45; color: #c9ddd2; display: flex; align-items: center; flex: none; padding-bottom: 3px; }
.autosave { margin-left: 15px; width: 33px; font-size: 8.500px; letter-spacing: -.3px; flex: none; }
.toggle { margin-left: 4px; width: 26px; height: 11px; border-radius: 6px; background: #fff; color: #333; font-size: 6.500px; display: flex; align-items: center; justify-content: space-between; padding: 0 2px 0 4px; flex: none; }
.toggle i { width: 7px; height: 7px; border-radius: 50%; background: #1e5a3c; }
.q-save { width: 11px; height: 11px; margin-left: 9px; }
.q-undo { width: 11px; height: 11px; margin: 0 2px 0 9px; }
.dimmed { opacity: .4; }
.q-more { margin-left: 5px; }
.doc { margin-left: 82px; width: 232px; font-size: 8.600px; letter-spacing: -.17px; flex: none; }
.context { margin-left: 80px; width: 61px; height: 20px; margin-bottom: -3px; background: #0d5232; color: #e3eee8; display: flex; align-items: center; justify-content: center; padding-bottom: 5px; font-size: 8.500px; font-weight: 500; letter-spacing: -.2px; flex: none; }
.x-user { margin-left: 483px; width: 33px; font-size: 8.500px; letter-spacing: -.3px; flex: none; }
.x-face { width: 16px; height: 16px; margin-left: 6px; }
.x-win { margin-left: 18px; display: flex; gap: 21px; }
.x-win svg { width: 10px; height: 10px; }

.x-tabs { height: 21px; background: #f3f1f0; display: flex; align-items: center; flex: none; font-size: 9px; letter-spacing: -.1px; }
.x-tabs span, .x-tabs b { flex: none; display: flex; align-items: center; }
.t1 { margin-left: 9px; width: 44px; letter-spacing: -.5px; }
.t2 { width: 23px; font-weight: 700; color: #222; height: 19px; margin-right: 17px; border-bottom: 2px solid #217346; letter-spacing: -.4px; }
.t3 { width: 37px; } .t4 { width: 78px; } .t5 { width: 35px; } .t6 { width: 40px; } .t7 { width: 36px; }
.t8 { width: 36px; } .t9 { width: 36px; } .t10 { width: 41px; } .t11 { width: 54px; letter-spacing: .1px; } .t12 { width: 87px; letter-spacing: .1px; }
.t13 { width: 63px; color: #217346; } .t14 { gap: 10px; }
.t14 svg { width: 9px; height: 9px; }
.x-tabs b { background: #fff; color: #1f6b43; height: 15px; gap: 4px; justify-content: center; }
.x-tabs b svg { width: 8px; height: 8px; }
.share-btn { margin-left: auto; width: 39px; }
.comment-btn { width: 49px; margin: 0 8px 0 7px; letter-spacing: -.4px; }

.ribbon { height: 64px; background: #f3f1f0; display: flex; padding-top: 2px; flex: none; border-bottom: 1px solid #ddd; }
.grp { height: 61px; border-right: 1px solid #b5b5b5; display: flex; flex-direction: column; flex: none; }
.g-body { height: 52px; display: flex; }
.g-label { height: 11px; padding-top: 1px; position: relative; display: flex; align-items: center; justify-content: center; font-size: 8.500px; letter-spacing: -.1px; }
.g-label svg { position: absolute; right: 2px; top: 2px; width: 6px; height: 6px; }
.g-clip { width: 135px; } .g-font { width: 183px; } .g-align { width: 206px; } .g-num { width: 101px; }
.g-style { width: 320px; } .g-cell { width: 95px; } .g-edit { width: 149px; } .g-idea { width: 39px; } .g-sec { width: 39px; border-right-color: #ccc; }
.big { display: flex; flex-direction: column; align-items: center; text-align: center; line-height: 10.500px; font-size: 8.200px; padding-top: 2px; letter-spacing: -.3px; flex: none; }
.big > svg:first-child { width: 20px; height: 20px; margin-bottom: 3px; }
.dim { color: #aaa; }
.g-clip .big { width: 36px; padding-left: 4px; letter-spacing: -.7px; }
.stack { display: flex; flex-direction: column; line-height: 16px; font-size: 8.500px; }
.stack span { height: 16px; display: flex; align-items: center; gap: 4px; letter-spacing: -.3px; }
.stack svg { width: 9px; height: 9px; }
.stack .tiny { width: 7px; height: 7px; margin-left: 3px; }
.g-clip .stack { padding-left: 4px; }
.g-clip .w { letter-spacing: -.75px; }
.rows { flex-direction: column; }
.row { height: 21px; display: flex; align-items: center; }
.rows .row:first-child { margin-top: 3px; }
.combo { height: 16px; background: #fff; border: 1px solid #c3c3c3; display: flex; align-items: center; justify-content: space-between; padding: 0 1px; color: #222; letter-spacing: -.7px; }
.fam { width: 116px; margin-left: 5px; } .size { width: 27px; border-left: 0; letter-spacing: 0; }
.aup { font-size: 11px; margin-left: 3px; } .adn { font-size: 9.500px; margin-left: 6px; }
.row sup { font-size: 6px; line-height: 0; color: #2b7cd3; }
.r-f2 { padding-left: 10px; gap: 4px; }
.r-f2 b { width: 11px; font-size: 9.500px; color: #222; } .it { width: 10px; font-family: "Liberation Serif", serif; font-size: 10px; }
.vr { width: 1px; height: 11px; background: #ddd; margin: 0 4px 0 4px; }
.ic { width: 10px; height: 10px; }
.fc { border-bottom: 3px solid #e33; width: 11px; text-align: center; line-height: 8px; }
.ruby { font-size: 5px; line-height: 5px; text-align: center; color: #888; }
.r-a { padding-left: 7px; }
.al { width: 15px; height: 15px; padding: 2.500px; }
.sel { background: #c6c4c4; }
.ori { width: 12px; height: 10px; margin: 0 2px 0 6px; }
.wrap { margin-left: 13px; background: #c8c6c6; height: 16px; width: 104px; display: flex; align-items: center; gap: 2px; padding-left: 3px; color: #222; letter-spacing: -.7px; font-size: 8.500px; }
.wrap svg, .merge svg:first-child { width: 10px; height: 10px; }
.ind, .ind2 { width: 10px; height: 10px; margin-left: 6px; } .ind2 { margin-left: 5px; }
.merge { margin-left: 9px; display: flex; align-items: center; gap: 3px; color: #a9a9a9; letter-spacing: -.8px; font-size: 8.500px; }
.std { width: 91px; margin-left: 5px; letter-spacing: 0; }
.r-n { padding-left: 7px; gap: 3px; }
.cur { width: 12px; height: 10px; } .pct { font-size: 11px; margin-left: 3px; } .comma { width: 6px; height: 10px; margin: 0 3px 0 5px; }
.dec { font-size: 5.500px; line-height: 5px; text-align: right; margin-right: 3px; }
.dec s { color: #2b7cd3; text-decoration: none; }
.big.cond { width: 32px; margin-left: 6px; letter-spacing: -.7px; } .big.tfmt { width: 46px; margin: 0 1px 0 1px; letter-spacing: -.9px; }
.gallery { flex: 1; height: 41px; margin-top: 1px; background: #fff; border: 1px solid #d5d5d5; border-right: 0; display: grid; grid-template-columns: 69px 68px 67px; gap: 4px; align-content: center; padding: 0 2px; font-size: 10px; letter-spacing: .3px; }
.gallery span { height: 15px; padding-left: 3px; line-height: 14px; }
.gallery .s1 { outline: 1.500px solid #b5b5b5; color: #222; font-size: 9.500px; } .s2 { background: #ffe596; color: #b5862c; } .s3 { background: #ffc7ce; color: #b33a3a; }
.s4 { background: #c6eccf; color: #2b7a3a; } .gallery .s5 { background: #9a9a9c; color: #fff; border: 1.500px solid #444; line-height: 12px; font-weight: 700; } .gallery .s6 { background: #fffdc8; border: 1px solid #b9b9a0; line-height: 12px; }
.gscroll { width: 10px; height: 41px; margin: 1px 7px 0 0; border: 1px solid #c3c3c3; display: flex; flex-direction: column; }
.gscroll svg { width: 8px; height: 13px; border-bottom: 1px solid #ccc; }
.g-cell .g-body { padding-left: 5px; }
.g-cell .big { width: 28px; }
.g-cell .tiny { margin-top: 1px; }
.g-edit .stack { padding-left: 8px; width: 72px; }
.sort { width: 42px; margin-left: 2px; }
.big.sort { letter-spacing: -.85px; }
.find { width: 30px; }
.big.find { letter-spacing: -.45px; }
.g-idea .big, .g-sec .big { width: 38px; }
.collapse { width: 8px; height: 8px; margin: 49px 0 0 14px; }

.fbar { height: 29px; padding: 8px 3px 0 3px; display: flex; flex: none; font-size: 10px; }
.fbar > span { height: 20px; display: flex; align-items: center; }
.nbox { width: 69px; background: #fcfcfc; border: 1px solid #c8c8c8; padding: 0 4px 0 5px; justify-content: space-between; color: #666; }
.nbox i { font-size: 6px; font-style: normal; }
.dots { width: 20px; justify-content: center; color: #aaa; }
.fx { width: 74px; background: #fcfcfc; border: 1px solid #d2d2d2; justify-content: space-evenly; font-family: "Liberation Serif", serif; }
.fx svg { width: 9px; height: 9px; }
.formula { margin-left: 2px; flex: 1; background: #fcfcfd; border: 1px solid #c8c8c8; padding: 0 2px 1px 8px; justify-content: space-between; letter-spacing: .2px; color: #555; font-feature-settings: normal; }

/* worksheet */
.grid-area { height: 530px; display: flex; flex: none; }
.sheet { width: 1279px; height: 530px; overflow: hidden; position: relative; font-feature-settings: normal; color: #161616; font-family: "Noto Sans CJK JP", sans-serif; font-weight: 300; font-size: 12.750px; }
.outline { height: 53px; display: flex; font-size: 7px; color: #666; }
.lv { width: 25px; padding: 8px 0 0 2px; display: flex; flex-direction: column; gap: 1px; }
.lv span, .plus { width: 21px; height: 20px; border: 1px solid #9a9a9a; display: flex; align-items: center; justify-content: center; }
.plus { margin: 8px 0 0 16px; font-size: 10px; color: #333; }
.r { display: grid; grid-template-columns: 27px 49px 259px 198px 254px 197px 261px 34px; }
.r > span { display: flex; align-items: center; position: relative; overflow: hidden; padding: 0 0 2px 2px; border-left: 1px solid #111; border-top: 1px solid #222; line-height: 22px; }
.r > span:first-child { border: 0; border-right: 1px solid #999; border-top: 1px solid #c4c4c6; background: #e6e6e8; align-items: flex-end; justify-content: center; line-height: 15px; padding: 0 0 3px; color: #444; }
.r > span:nth-child(2) { border-left: 0; }
.r > span:last-child { border-left-color: #888; }
.r > .long { letter-spacing: .02px; }
.cols { height: 20px; }
.r.cols > span { border: 0; border-left: 1px solid #c2c2c4; justify-content: center; color: #444; font-size: 12.500px; padding: 0 0 3px; line-height: 16px; }
.r.cols > .corner { padding: 0; border: 0; }
.corner::after { content: ""; position: absolute; right: 2px; bottom: 3px; border-left: 15px solid transparent; border-bottom: 15px solid #b5b5b7; }
.h1 { height: 31px; font-weight: 700; color: #111; }
.h1 > span { border-top-color: #2a2478; }
.h2 { height: 46px; border-bottom: 2px solid #7d7d7d; }
.h2 > span { padding-bottom: 0; }
.h2 b { font-weight: 700; }
.h1 > span:not(:first-child), .h2 > span:not(:first-child) { background: #ffe6d8; }
.h1 > span:first-child { font-weight: 300; }
.h2 > span:nth-child(2) { border-top: 0; }
.h2 i { position: absolute; right: 1px; bottom: 0; width: 11px; height: 11px; background: #fff; border: 1px solid #aaa; }
.h2 i::after { content: ""; position: absolute; left: 2.500px; top: 3px; border: 2px solid transparent; border-top: 3px solid #456; border-bottom: 0; }
.d { height: 56px; }
.d > span { background: #fff; }
.d > span:nth-child(2) { letter-spacing: .75px; }
.first > span:not(:first-child) { border-top-width: 0; }
.watermark { position: absolute; left: 1049px; top: 151px; width: 230px; height: 90px; mix-blend-mode: multiply; }
.vscroll { margin-left: 3px; width: 11px; display: flex; flex-direction: column; background: #dadadc; margin-top: 8px; }
.vscroll i, .hscroll i { width: 10px; height: 10px; background: #fff; border: 1px solid #c4c4c4; font-size: 7px; line-height: 8px; text-align: center; font-style: normal; }
.vscroll b { margin-top: 22px; height: 11px; width: 9px; background: #fff; border: 1px solid #c4c4c4; margin-bottom: auto; }

.sheets { height: 20px; border-top: 1px solid #999; display: flex; align-items: center; flex: none; border-bottom: 1px solid #ccc; }
.prev { margin-left: 16px; width: 21px; color: #217346; } .next { width: 16px; color: #bbb; font-size: 6px; } .ell { width: 14px; font-weight: 700; }
.tab { width: 46px; height: 17px; background: #fff; color: #217346; border-bottom: 2px solid #217346; display: flex; align-items: center; justify-content: center; font-size: 9.300px; letter-spacing: -.6px; align-self: flex-start; }
.add { width: 12px; height: 12px; margin-left: 21px; }
.grip { margin-left: 628px; width: 13px; color: #999; }
.hscroll { flex: 1; margin-right: 15px; height: 10px; background: #d8d8d9; display: flex; }
.hscroll b { width: 216px; background: #fff; margin-right: auto; border: 1px solid #c4c4c4; }

.status { height: 14px; background: #f3f1f0; display: flex; align-items: center; flex: none; }
.status svg { width: 9px; height: 9px; }
.macro { margin-left: 5px; margin-right: auto; }
.v2 { margin: 0 14px 0 18px; }
.v3 { width: 26px; height: 14px; background: #cbc9c9; display: flex; align-items: center; justify-content: center; }
.minus { margin-left: 4px; } .slider { width: 67px; height: 1px; background: #bbb; margin: 0 4px; position: relative; }
.slider i { position: absolute; left: 35px; top: -3px; width: 3px; height: 7px; background: #666; }
.zoom { margin: 0 7px 0 7px; width: 21px; font-size: 8.700px; letter-spacing: -.2px; }

.taskbar { height: 23px; background: linear-gradient(90deg, #213642 0, #213642 30%, #1e2f47 50%, #1b2c4c 75%, #1b2a40); display: flex; align-items: center; flex: none; color: #fff; padding-top: 1px; }
.start { width: 32px; display: grid; grid-template-columns: 5px 5px; gap: 1px; justify-content: center; }
.start i { height: 5px; background: #fff; }
.tsearch { width: 232px; height: 23px; background: #f2f2f2; color: #333; display: flex; align-items: center; gap: 8px; padding-left: 8px; font-size: 9.500px; letter-spacing: -.6px; }
.tsearch svg { width: 11px; height: 11px; }
.apps { display: flex; margin-left: 2px; }
.apps > span { width: 33px; height: 23px; display: flex; align-items: center; justify-content: center; padding-top: 1px; }
.apps svg { width: 15px; height: 15px; }
.cur-app { background: #42566a; }
.apps .rv, .apps .ai, .apps .on { width: 15px; height: 16px; margin: 4px 9px; font-weight: 700; font-size: 12px; background: #dceaf8; color: #1c58a5; padding: 0; }
.apps .ai { background: #2c1204; color: #f39b27; border: 1px solid #b96f17; font-size: 8px; }
.apps .on { background: #80397b; border: 1px solid #e7cbe8; color: #fff; font-size: 9px; }
.tray { display: flex; gap: 4px; margin-left: auto; }
.tray svg { width: 12px; height: 12px; }
.clock { width: 51px; text-align: center; font-size: 7.500px; line-height: 12px; letter-spacing: -.1px; }
.note { width: 13px; height: 13px; margin: 0 16px 0 5px; }

/* participants panel */
.panel { flex: 1; background: #1f1f1f; border-left: 1px solid #0c0c0c; padding: 0 25px 0 25px; position: relative; overflow: hidden; border-bottom: 1px solid #000; }
.p-head { height: 103px; display: flex; justify-content: space-between; padding-top: 47px; }
.p-head h2 { margin: 0; font-size: 20px; font-weight: 700; }
.p-head svg { width: 16px; height: 16px; margin: 8px 12px 0 0; }
.p-search { height: 40px; background: #2a2a2a; border-radius: 2px; display: flex; align-items: center; justify-content: space-between; padding: 0 12px 0 14px; font-size: 16.500px; letter-spacing: -.85px; color: #c9c9c9; }
.p-search svg { width: 19px; height: 19px; color: #fff; }
.invite { width: 350px; height: 40px; margin-top: 12px; font-size: 16.800px; display: flex; align-items: center; justify-content: center; gap: 12px; }
.invite svg { width: 20px; height: 20px; }
.p-sec { height: 30px; margin: 40px -1px 0 -17px; width: 357px; display: flex; align-items: center; font-size: 14.500px; letter-spacing: -.25px; color: #eee; }
.p-sec i { border: 4.500px solid transparent; border-top: 5px solid #888; border-bottom: 0; margin: 0 8px 0 2px; }
.mute { margin-left: auto; width: 109px; height: 30px; font-size: 14px; letter-spacing: -1.150px; }
.plist { list-style: none; margin: 4px 0 0; padding: 0; }
.plist li { height: 62.400px; display: flex; align-items: center; }
.plist .av { width: 40px; height: 40px; font-size: 15.500px; font-weight: 300; margin: 0 10px 0 1px; padding-bottom: 2px; }
.plist .nt { font-weight: 500; font-size: 14.500px; padding-bottom: 0; }
.ring { box-shadow: 0 0 0 2px #1b1b2c, 0 0 0 5px #9a9bee; }
.av em { position: absolute; right: -2px; bottom: -1px; width: 16px; height: 16px; border-radius: 50%; background: #c4314b; border: 2.500px solid #262626; }
.av em.guest { background: #fff; }
.av em.dnd::after { content: ""; position: absolute; left: 3px; top: 4.500px; width: 5px; height: 2px; background: #fff; }
.plist p { margin: 0; font-size: 17.500px; line-height: 22px; white-space: nowrap; }
.plist .b { font-weight: 700; }
.plist .lat { letter-spacing: -1.080px; }
.plist small { display: block; font-size: 14.300px; line-height: 19px; color: #a5a5a5; }
.plist li > svg { width: 20px; height: 20px; margin: 0 21px 0 auto; }
.second { margin-top: 15px; }
.invited { margin-top: 3px; }
.p-scroll { position: absolute; left: 384px; top: 225px; width: 10px; height: 423px; border-radius: 5px; background: #777; }
```
